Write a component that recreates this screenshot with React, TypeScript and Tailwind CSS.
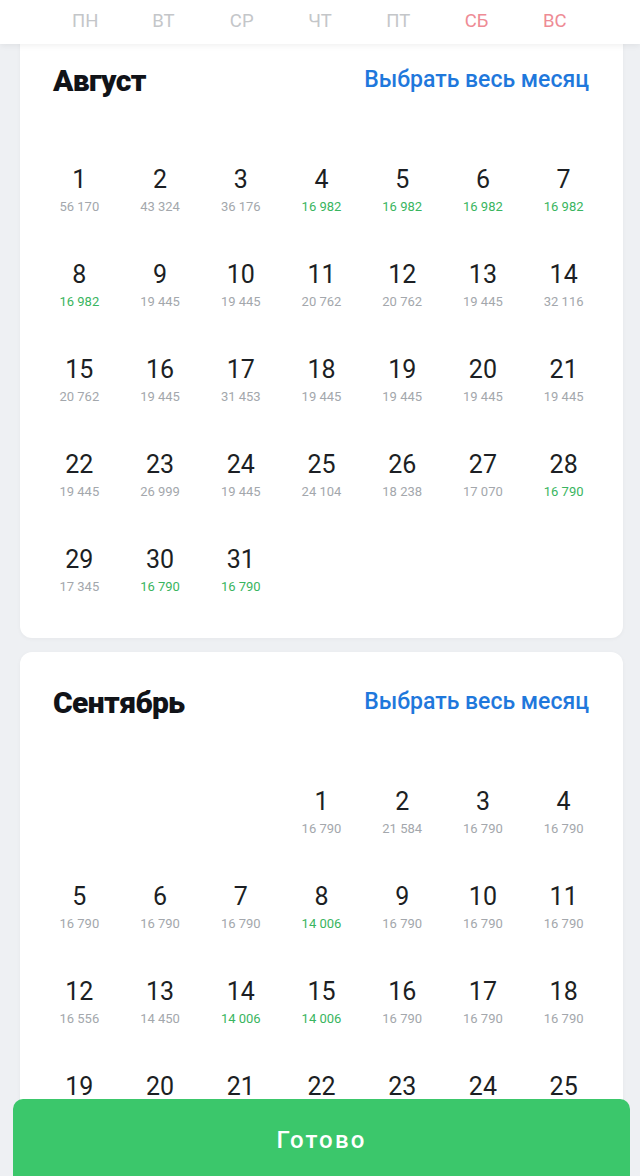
import React from 'react';

type Day = { d: number; p: string; low?: boolean };

const weekDays = ['ПН', 'ВТ', 'СР', 'ЧТ', 'ПТ', 'СБ', 'ВС'];

const august: Day[] = [
  { d: 1, p: '56 170' }, { d: 2, p: '43 324' }, { d: 3, p: '36 176' },
  { d: 4, p: '16 982', low: true }, { d: 5, p: '16 982', low: true },
  { d: 6, p: '16 982', low: true }, { d: 7, p: '16 982', low: true },
  { d: 8, p: '16 982', low: true }, { d: 9, p: '19 445' }, { d: 10, p: '19 445' },
  { d: 11, p: '20 762' }, { d: 12, p: '20 762' }, { d: 13, p: '19 445' }, { d: 14, p: '32 116' },
  { d: 15, p: '20 762' }, { d: 16, p: '19 445' }, { d: 17, p: '31 453' }, { d: 18, p: '19 445' },
  { d: 19, p: '19 445' }, { d: 20, p: '19 445' }, { d: 21, p: '19 445' },
  { d: 22, p: '19 445' }, { d: 23, p: '26 999' }, { d: 24, p: '19 445' }, { d: 25, p: '24 104' },
  { d: 26, p: '18 238' }, { d: 27, p: '17 070' }, { d: 28, p: '16 790', low: true },
  { d: 29, p: '17 345' }, { d: 30, p: '16 790', low: true }, { d: 31, p: '16 790', low: true },
];

const september: Day[] = [
  { d: 1, p: '16 790' }, { d: 2, p: '21 584' }, { d: 3, p: '16 790' }, { d: 4, p: '16 790' },
  { d: 5, p: '16 790' }, { d: 6, p: '16 790' }, { d: 7, p: '16 790' },
  { d: 8, p: '14 006', low: true }, { d: 9, p: '16 790' }, { d: 10, p: '16 790' }, { d: 11, p: '16 790' },
  { d: 12, p: '16 556' }, { d: 13, p: '14 450' }, { d: 14, p: '14 006', low: true },
  { d: 15, p: '14 006', low: true }, { d: 16, p: '16 790' }, { d: 17, p: '16 790' }, { d: 18, p: '16 790' },
  { d: 19, p: '16 790' }, { d: 20, p: '16 790' }, { d: 21, p: '16 790' }, { d: 22, p: '16 790' },
  { d: 23, p: '16 790' }, { d: 24, p: '16 790' }, { d: 25, p: '16 790' },
];

function MonthCard({ title, days, offset }: { title: string; days: Day[]; offset: number }) {
  return (
    <div className="ml-[20px] mr-[17px] bg-white rounded-[12px] shadow-[0_1px_4px_rgba(0,0,0,0.04)] pt-[34px] pb-[21px] px-[19px]">
      <div className="flex items-center justify-between pl-[14px] pr-[15px] h-[32px]">
        <h2 className="text-[30px] font-black text-[#111318] tracking-[-0.6px]">{title}</h2>
        <button className="text-[23px] font-medium text-[#1f78dc]">Выбрать весь месяц</button>
      </div>
      <div className="grid grid-cols-7 mt-[46px]">
        {Array.from({ length: offset }).map((_, i) => (
          <div key={'e' + i} />
        ))}
        {days.map((day) => (
          <div key={day.d} className="h-[95px] pt-[23px] flex flex-col items-center">
            <span className="text-[25px] leading-[30px] text-[#1c1f24]">{day.d}</span>
            <span
              className={
                'text-[13px] leading-[16px] mt-[4px] ' +
                (day.low ? 'text-[#39b560]' : 'text-[#a3a7ac]')
              }
            >
              {day.p}
            </span>
          </div>
        ))}
      </div>
    </div>
  );
}

export default function App() {
  return (
    <div
      className="relative w-[640px] h-[1176px] overflow-hidden bg-[#eef0f3]"
      style={{ fontFamily: 'Roboto, "Noto Sans", sans-serif' }}
    >
      <div className="absolute top-0 left-0 right-0 z-10 h-[44px] bg-white shadow-[0_2px_6px_rgba(0,0,0,0.06)] grid grid-cols-7 px-[46px] items-center">
        {weekDays.map((w, i) => (
          <span
            key={w}
            className={
              'text-center text-[18.5px] ' + (i >= 5 ? 'text-[#ee8b95]' : 'text-[#c4c6c9]')
            }
          >
            {w}
          </span>
        ))}
      </div>

      <div className="pt-[30px] flex flex-col gap-[14px]">
        <MonthCard title="Август" days={august} offset={0} />
        <MonthCard title="Сентябрь" days={september} offset={3} />
      </div>

      <div className="absolute left-[13px] right-[10px] top-[1099px] h-[100px] z-20 bg-[#3bc76b] rounded-[10px] flex justify-center pt-[27px]">
        <span className="text-white text-[24px] font-medium tracking-[2.2px] leading-[28px]">Готово</span>
      </div>
    </div>
  );
}
